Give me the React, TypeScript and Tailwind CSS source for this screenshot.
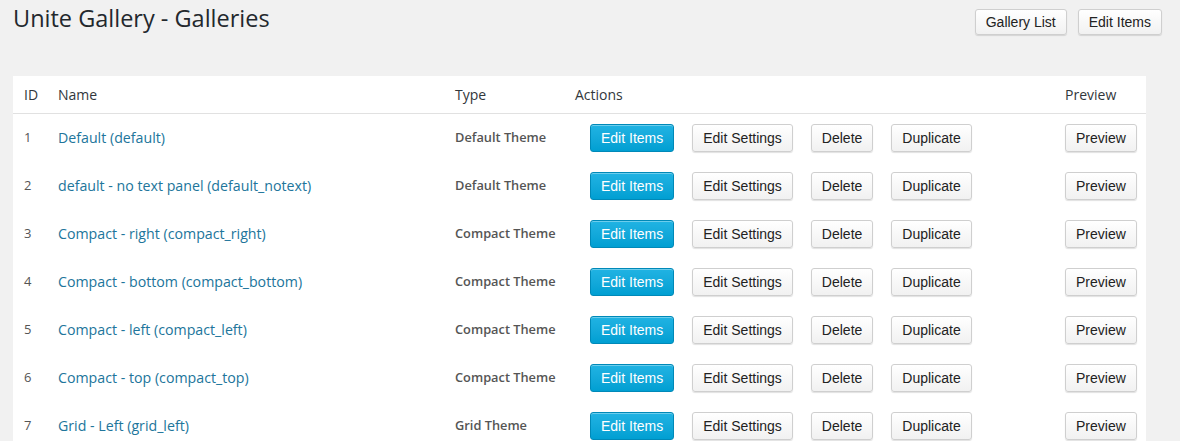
const ROWS = [
  { id: 1, name: 'Default (default)', type: 'Default Theme' },
  { id: 2, name: 'default - no text panel (default_notext)', type: 'Default Theme' },
  { id: 3, name: 'Compact - right (compact_right)', type: 'Compact Theme' },
  { id: 4, name: 'Compact - bottom (compact_bottom)', type: 'Compact Theme' },
  { id: 5, name: 'Compact - left (compact_left)', type: 'Compact Theme' },
  { id: 6, name: 'Compact - top (compact_top)', type: 'Compact Theme' },
  { id: 7, name: 'Grid - Left (grid_left)', type: 'Grid Theme' },
];

const COLS = 'grid grid-cols-[35px_397px_120px_490px_1fr]';

function Btn({ children, primary = false, small = false }: { children: string; primary?: boolean; small?: boolean }) {
  const look = primary
    ? 'bg-gradient-to-b from-[#20b3e3] to-[#009fd2] border-[#0089b8] text-white shadow-[inset_0_1px_0_rgba(255,255,255,0.35)]'
    : 'bg-gradient-to-b from-white to-[#f1f1f1] border-[#cfcfcf] text-[#222] shadow-[0_1px_1px_rgba(0,0,0,0.12)]';
  return (
    <button
      className={`${small ? 'h-[26px]' : 'h-[28px]'} px-[10px] rounded-[3px] border text-[14px] leading-none font-['Liberation_Sans',Arial,sans-serif] whitespace-nowrap ${look}`}>
      {children}
    </button>
  );
}

export default function App() {
  return (
    <div className="w-[1180px] h-[441px] overflow-hidden bg-[#f1f1f1] font-['Open_Sans',sans-serif]">
      {/* Header */}
      <div className="flex items-start justify-between pl-[13px] pr-[18px]">
        <h1 className="pt-[4px] text-[23.5px] leading-[29px] text-[#23282d] font-normal">Unite Gallery - Galleries</h1>
        <div className="flex gap-[11px] pt-[9px]">
          <Btn small>Gallery List</Btn>
          <Btn small>Edit Items</Btn>
        </div>
      </div>

      {/* Table */}
      <div className="ml-[13px] mt-[41px] w-[1133px] bg-white">
        <div className={`${COLS} h-[38px] items-center border-b border-[#e1e1e1] text-[14px] text-[#32373c]`}>
          <div className="pl-[11px]">ID</div>
          <div className="pl-[10px]">Name</div>
          <div className="pl-[10px]">Type</div>
          <div className="pl-[10px]">Actions</div>
          <div className="pl-[10px]">Preview</div>
        </div>
        {ROWS.map((r) => (
          <div key={r.id} className={`${COLS} h-[48px] items-center`}>
            <div className="pl-[11px] text-[13px] text-[#555]">{r.id}</div>
            <div className="pl-[10px] text-[14.2px] text-[#21759b]">{r.name}</div>
            <div className="pl-[10px] text-[12.8px] font-semibold text-[#555]">{r.type}</div>
            <div className="pl-[25px] flex gap-[18px]">
              <Btn primary>Edit Items</Btn>
              <Btn>Edit Settings</Btn>
              <Btn>Delete</Btn>
              <Btn>Duplicate</Btn>
            </div>
            <div className="pl-[10px]">
              <Btn>Preview</Btn>
            </div>
          </div>
        ))}
      </div>
    </div>
  );
}
